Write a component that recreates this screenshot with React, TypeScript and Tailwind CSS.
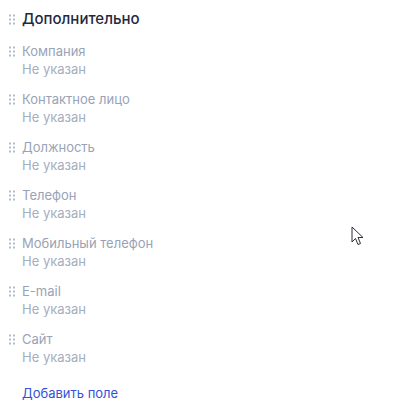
import React from "react";

const fields = [
  "Компания",
  "Контактное лицо",
  "Должность",
  "Телефон",
  "Мобильный телефон",
  "E-mail",
  "Сайт",
];

const Grip = () => (
  <svg width="8" height="11" viewBox="0 0 8 11" className="shrink-0 text-[#b4bccb]" fill="currentColor">
    <rect x="1" y="0.5" width="2" height="2" />
    <rect x="5" y="0.5" width="2" height="2" />
    <rect x="1" y="4.5" width="2" height="2" />
    <rect x="5" y="4.5" width="2" height="2" />
    <rect x="1" y="8.5" width="2" height="2" />
    <rect x="5" y="8.5" width="2" height="2" />
  </svg>
);

const App: React.FC = () => {
  return (
    <div className="relative w-[414px] h-[416px] bg-white font-['Inter',sans-serif]">
      <div className="flex flex-col gap-3 pt-2 pl-[8px]">
        <div className="flex items-center gap-1.5 h-[22px]">
          <Grip />
          <h3 className="text-[15px] font-medium text-[#1f2a3d] leading-[22px]">Дополнительно</h3>
        </div>

        {fields.map((f) => (
          <div key={f} className="flex gap-1.5">
            <div className="h-[18px] flex items-center">
              <Grip />
            </div>
            <div className="flex flex-col text-[13px] leading-[18px]">
              <span className="text-[#98a3b7]">{f}</span>
              <span className="text-[#a3aec0]">Не указан</span>
            </div>
          </div>
        ))}

        <button className="mt-1.5 ml-[14px] self-start text-[13px] leading-[18px] text-[#3352d6]">
          Добавить поле
        </button>
      </div>

      <svg
        className="absolute left-[351px] top-[226px]"
        width="14"
        height="21"
        viewBox="0 0 14 21"
      >
        <path
          d="M1 1 L1 16 L4.5 12.5 L7 18.5 L9.5 17.5 L7 11.5 L12 11.5 Z"
          fill="#fff"
          stroke="#2b2f3a"
          strokeWidth="1"
          strokeLinejoin="round"
        />
      </svg>
    </div>
  );
};

export default App;
